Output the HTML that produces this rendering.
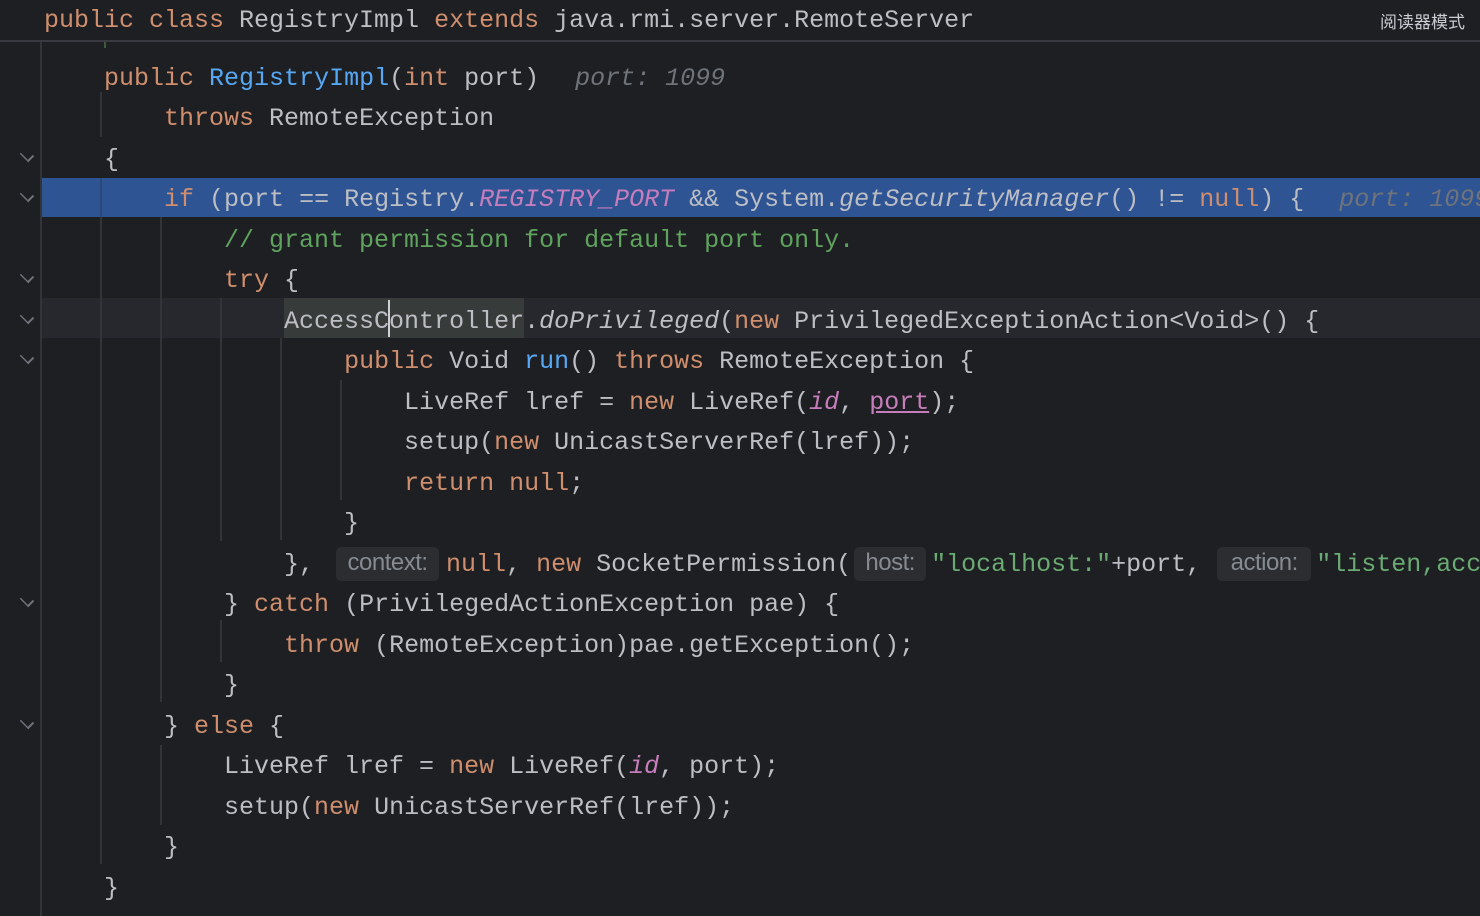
<!DOCTYPE html>
<html><head><meta charset="utf-8"><style>
html,body{margin:0;width:1480px;height:916px;overflow:hidden}
body{background:#1e1f22;position:relative;font-family:"Liberation Mono",monospace;font-size:25px;color:#bcbec4}
#w{position:absolute;left:0;top:0;width:1480px;height:916px;overflow:hidden}
.hdr{position:absolute;left:0;top:0;width:1480px;height:40px;background:#1e1f22;border-bottom:2px solid #393b40}
.hdr .t{position:absolute;left:44px;top:6px;white-space:pre}
.rm{position:absolute;right:15px;top:8px;font:17px "Liberation Sans","Noto Sans CJK SC",sans-serif;color:#c9ccd2}
.gut{position:absolute;left:40px;top:42px;width:2px;height:874px;background:#313438}
.l{position:absolute;left:44px;white-space:pre;height:40px;line-height:44px}
.k{color:#cf8e6d}.m{color:#56a8f5}.s{color:#c77dbb;font-style:italic}.c{color:#5fa35f}.st{color:#6aab73}
.i{font-style:italic}.h{color:#6f737a;font-style:italic}.u{text-decoration:underline}
.ib{display:inline-block;background:#2b2d30;border-radius:5px;color:#868a91;font:24px "Liberation Sans",sans-serif;text-align:center;height:34px;line-height:32px;vertical-align:middle;letter-spacing:-0.5px}
.g{position:absolute;width:2px;background:#313438}
.f{position:absolute;left:21px;width:10px;height:10px;border-right:2px solid #6f737a;border-bottom:2px solid #6f737a;transform:rotate(45deg) scaleY(0.7)}
</style></head><body><div id="w">
<div class="hdr"><div class="t"><span class="k">public class</span> RegistryImpl <span class="k">extends</span> java.rmi.server.RemoteServer</div><div class="rm">阅读器模式</div></div>
<div class="gut"></div>
<div style="position:absolute;left:42px;top:178px;width:1438px;height:39px;background:#2e5494"></div>
<div style="position:absolute;left:42px;top:298px;width:1438px;height:40px;background:#26282e"></div>
<div style="position:absolute;left:284px;top:298px;width:240px;height:40px;background:#373b39"></div>
<div class="g" style="left:100px;top:92px;height:45px"></div>
<div class="g" style="left:100px;top:178px;height:686px;background:#2a4878"></div>
<div class="g" style="left:100px;top:217px;height:647px"></div>
<div class="g" style="left:160px;top:217px;height:485px"></div>
<div class="g" style="left:160px;top:745px;height:80px"></div>
<div class="g" style="left:220px;top:298px;height:243px"></div>
<div class="g" style="left:220px;top:620px;height:42px"></div>
<div class="g" style="left:280px;top:338px;height:202px"></div>
<div class="g" style="left:340px;top:380px;height:120px"></div>
<div class="g" style="left:104px;top:42px;height:6px;background:#3d5a3d"></div>
<div class="f" style="top:149px"></div><div class="f" style="top:189px"></div><div class="f" style="top:270px"></div><div class="f" style="top:311px"></div><div class="f" style="top:351px"></div><div class="f" style="top:594px"></div><div class="f" style="top:716px"></div>
<div class="l" style="top:57px">    <span class="k">public</span> <span class="m">RegistryImpl</span>(<span class="k">int</span> port)  <span class="h" style="margin-left:6px">port: 1099</span></div>
<div class="l" style="top:97px">        <span class="k">throws</span> RemoteException</div>
<div class="l" style="top:138px">    {</div>
<div class="l" style="top:178px">        <span class="k">if</span> (port == Registry.<span class="s">REGISTRY_PORT</span> &amp;&amp; System.<span class="i">getSecurityManager</span>() != <span class="k">null</span>) {  <span class="h" style="margin-left:5px">port: 1099</span></div>
<div class="l" style="top:219px">            <span class="c">// grant permission for default port only.</span></div>
<div class="l" style="top:259px">            <span class="k">try</span> {</div>
<div class="l" style="top:300px">                AccessController.<span class="i">doPrivileged</span>(<span class="k">new</span> PrivilegedExceptionAction&lt;Void&gt;() {</div>
<div style="position:absolute;left:388px;top:300px;width:2px;height:37px;background:#ced0d6"></div>
<div class="l" style="top:340px">                    <span class="k">public</span> Void <span class="m">run</span>() <span class="k">throws</span> RemoteException {</div>
<div class="l" style="top:381px">                        LiveRef lref = <span class="k">new</span> LiveRef(<span class="s">id</span>, <span class="u" style="color:#c77dbb">port</span>);</div>
<div class="l" style="top:421px">                        setup(<span class="k">new</span> UnicastServerRef(lref));</div>
<div class="l" style="top:462px">                        <span class="k">return null</span>;</div>
<div class="l" style="top:502px">                    }</div>
<div class="l" style="top:543px">                }, <span class="ib" style="width:103px;margin-left:7px;margin-right:7px">context:</span><span class="k">null</span>, <span class="k">new</span> SocketPermission(<span class="ib" style="width:72px;margin-left:3px;margin-right:5px">host:</span><span class="st">"localhost:"</span>+port, <span class="ib" style="width:94px;margin-left:1px;margin-right:5px">action:</span><span class="st">"listen,accept"</span>));</div>
<div class="l" style="top:583px">            } <span class="k">catch</span> (PrivilegedActionException pae) {</div>
<div class="l" style="top:624px">                <span class="k">throw</span> (RemoteException)pae.getException();</div>
<div class="l" style="top:664px">            }</div>
<div class="l" style="top:705px">        } <span class="k">else</span> {</div>
<div class="l" style="top:745px">            LiveRef lref = <span class="k">new</span> LiveRef(<span class="s">id</span>, port);</div>
<div class="l" style="top:786px">            setup(<span class="k">new</span> UnicastServerRef(lref));</div>
<div class="l" style="top:826px">        }</div>
<div class="l" style="top:867px">    }</div>
</div></body></html>
